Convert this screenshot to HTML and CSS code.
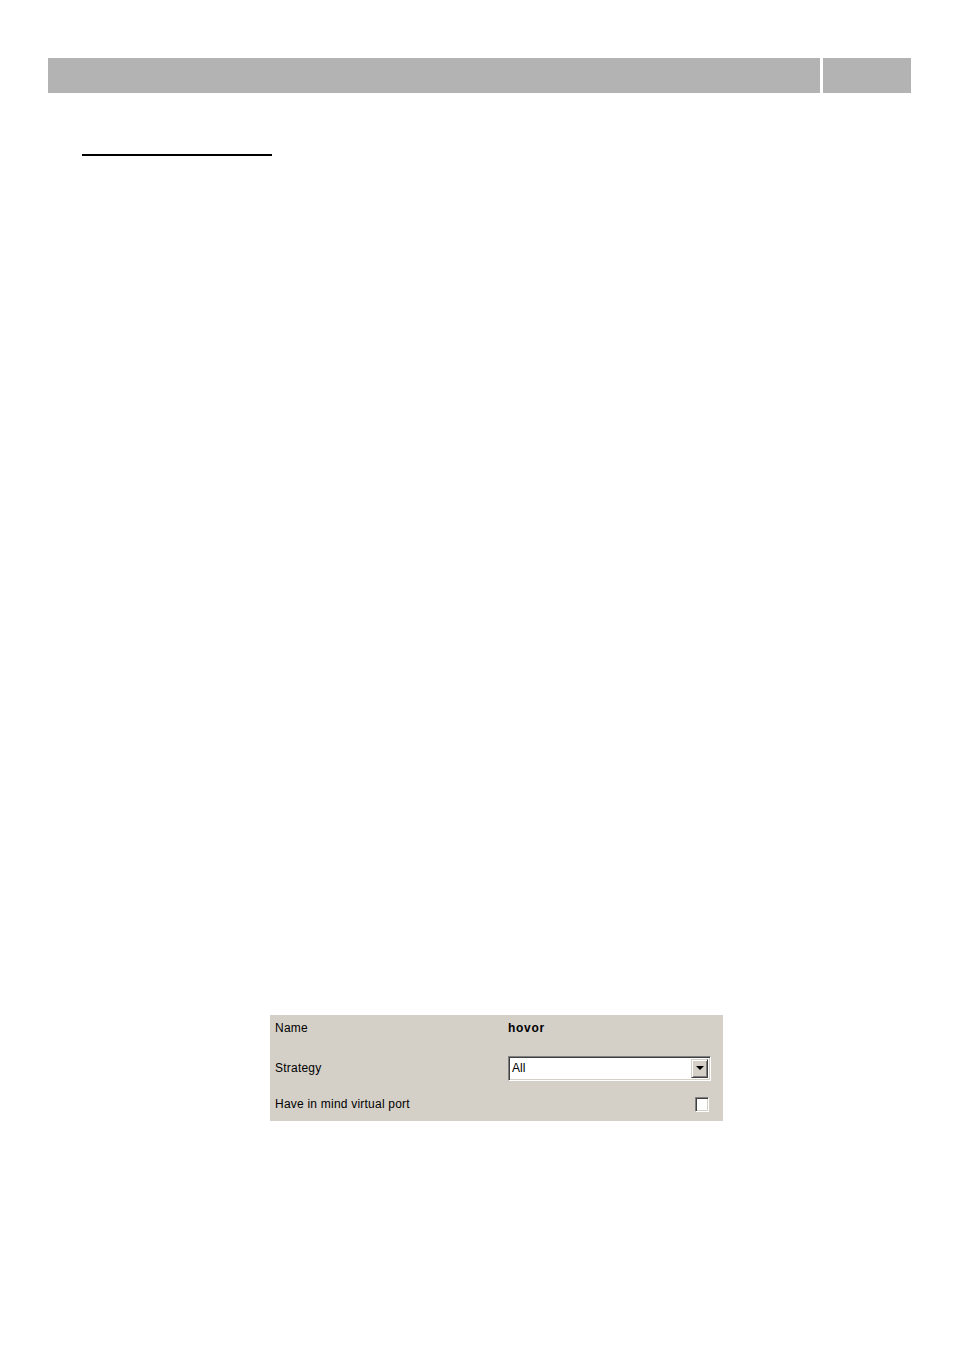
FILE: index.html
```html
<!DOCTYPE html>
<html>
<head>
<meta charset="utf-8">
<link rel="stylesheet" href="styles.css">
</head>
<body>
<div class="header">
  <div class="bar bar-main"></div>
  <div class="bar bar-side"></div>
</div>
<div class="rule"></div>
<div class="panel">
  <div class="row row-name">
    <span class="label">Name</span>
    <span class="value">hovor</span>
  </div>
  <div class="row row-strategy">
    <span class="label">Strategy</span>
    <div class="select">
      <span class="select-text">All</span>
      <span class="select-btn"><svg width="8" height="4" viewBox="0 0 8 4"><path d="M0 0H8L4 4Z" fill="#000"/></svg></span>
    </div>
  </div>
  <div class="row row-check">
    <span class="label">Have in mind virtual port</span>
    <span class="checkbox"></span>
  </div>
</div>
</body>
</html>
```

FILE: styles.css
```css
html, body {
  margin: 0;
  padding: 0;
  background: #ffffff;
}
body {
  width: 954px;
  height: 1349px;
  font-family: "Liberation Sans", Arial, sans-serif;
}
.header {
  display: flex;
  gap: 3px;
  margin: 58px 0 0 48px;
  height: 35px;
}
.bar {
  background: #b3b3b3;
  height: 35px;
}
.bar-main {
  width: 772px;
}
.bar-side {
  width: 88px;
}
.rule {
  margin: 61px 0 0 82px;
  width: 190px;
  height: 2px;
  background: #000000;
}
.panel {
  margin: 859px 0 0 270px;
  width: 453px;
  box-sizing: border-box;
  padding: 0 0 4px 5px;
  background: #d4d0c8;
  font-size: 12px;
  color: #000;
}
.row {
  display: flex;
  align-items: center;
  height: 26px;
}
.row-name {
  height: 25px;
}
.row-strategy {
  margin-top: 15px;
}
.row-check {
  margin-top: 10px;
}
.label {
  width: 233px;
  flex: none;
  letter-spacing: 0.22px;
}
.value {
  font-weight: bold;
  margin-left: 0;
  letter-spacing: 0.7px;
}
.select {
  width: 203px;
  height: 25px;
  box-sizing: border-box;
  display: flex;
  align-items: center;
  background: #ffffff;
  border-top: 1px solid #808080;
  border-left: 1px solid #808080;
  border-right: 1px solid #ffffff;
  border-bottom: 1px solid #ffffff;
  box-shadow: inset 1px 1px 0 #404040, inset -1px -1px 0 #d4d0c8;
  padding: 2px;
}
.select-text {
  flex: 1;
  padding-left: 1px;
  color: #000;
}
.select-btn {
  width: 17px;
  height: 19px;
  box-sizing: border-box;
  background: #d4d0c8;
  display: flex;
  align-items: center;
  justify-content: center;
  border-top: 1px solid #d4d0c8;
  border-left: 1px solid #d4d0c8;
  border-right: 1px solid #404040;
  border-bottom: 1px solid #404040;
  box-shadow: inset 1px 1px 0 #ffffff, inset -1px -1px 0 #808080;
}
.checkbox {
  margin-left: auto;
  margin-right: 14px;
  width: 14px;
  height: 15px;
  box-sizing: border-box;
  background: #ffffff;
  border-top: 1px solid #808080;
  border-left: 1px solid #808080;
  border-right: 1px solid #ffffff;
  border-bottom: 1px solid #ffffff;
  box-shadow: inset 1px 1px 0 #404040, inset -1px -1px 0 #d4d0c8;
}
```
